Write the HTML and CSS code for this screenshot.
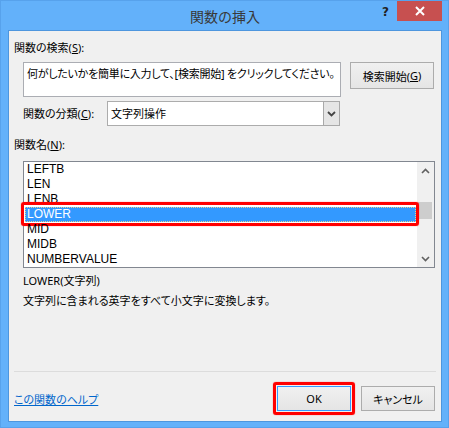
FILE: index.html
```html
<!DOCTYPE html>
<html lang="ja">
<head>
<meta charset="utf-8">
<title>関数の挿入</title>
<link rel="stylesheet" href="styles.css">
</head>
<body>
<div class="window">
  <div class="titlebar">
    <div class="tb-spacer"></div>
    <div class="title">関数の挿入</div>
    <div class="tb-controls">
      <span class="help-q">?</span>
      <div class="close">
        <svg width="10" height="10" viewBox="0 0 10 10"><path d="M1 1 L9 9 M9 1 L1 9" stroke="#fff" stroke-width="2" fill="none"/></svg>
      </div>
    </div>
  </div>
  <div class="content">
    <div class="label label-search">関数の検索(<u>S</u>):</div>
    <div class="search-row">
      <div class="textbox">何がしたいかを簡単に入力して、[検索開始] をクリックしてください。</div>
      <div class="btn btn-search">検索開始(<u>G</u>)</div>
    </div>
    <div class="cat-row">
      <div class="label label-cat">関数の分類(<u>C</u>):</div>
      <div class="select">
        <span class="select-val">文字列操作</span>
        <span class="select-arrow"><svg width="9" height="6" viewBox="0 0 9 6"><path d="M1 1 L4.5 4.5 L8 1" stroke="#444" stroke-width="1.8" fill="none"/></svg></span>
      </div>
    </div>
    <div class="label label-name">関数名(<u>N</u>):</div>
    <div class="listbox">
      <ul class="items">
        <li class="item">LEFTB</li>
        <li class="item">LEN</li>
        <li class="item">LENB</li>
        <li class="item selected">LOWER<span class="mark"></span></li>
        <li class="item">MID</li>
        <li class="item">MIDB</li>
        <li class="item">NUMBERVALUE</li>
      </ul>
      <div class="scrollbar">
        <div class="sb-btn"><svg width="9" height="6" viewBox="0 0 9 6"><path d="M1 5 L4.5 1.5 L8 5" stroke="#606060" stroke-width="1.6" fill="none"/></svg></div>
        <div class="sb-track"><div class="sb-thumb"></div></div>
        <div class="sb-btn"><svg width="9" height="6" viewBox="0 0 9 6"><path d="M1 1 L4.5 4.5 L8 1" stroke="#606060" stroke-width="1.6" fill="none"/></svg></div>
      </div>
    </div>
    <div class="desc">
      <div class="desc-line">LOWER(文字列)</div>
      <div class="desc-line">文字列に含まれる英字をすべて小文字に変換します。</div>
    </div>
    <div class="footer">
      <a class="help-link" href="#">この関数のヘルプ</a>
      <div class="buttons">
        <div class="btn btn-ok">OK<span class="mark mark-ok"></span></div>
        <div class="btn btn-cancel">キャンセル</div>
      </div>
    </div>
  </div>
</div>
</body>
</html>
```
FILE: styles.css
```css
html, body {
  margin: 0;
  padding: 0;
}
body {
  font-family: "Noto Sans", "Noto Sans CJK JP", sans-serif;
  font-size: 11px;
  color: #000;
  font-feature-settings: "palt";
}
.window {
  width: 449px;
  height: 428px;
  box-sizing: border-box;
  background: #63b1fa;
  border: 1px solid #57a2ec;
  padding: 0 6px 5px 7px;
  display: flex;
  flex-direction: column;
}
.titlebar {
  height: 29px;
  display: grid;
  grid-template-columns: 1fr auto 1fr;
  align-items: start;
}
.title {
  font-family: "Noto Sans CJK JP", sans-serif;
  font-size: 14px;
  line-height: 30px;
  color: #383838;
  font-feature-settings: normal;
}
.tb-controls {
  justify-self: end;
  display: flex;
  align-items: flex-start;
}
.help-q {
  font-family: "DejaVu Sans", sans-serif;
  font-weight: bold;
  font-size: 12px;
  line-height: 20px;
  color: #222;
  margin-right: 8px;
  margin-top: 1px;
}
.close {
  width: 45px;
  height: 20px;
  background: #c75050;
  display: flex;
  align-items: center;
  justify-content: center;
}
.content {
  flex: 1;
  background: #f0f0f0;
  border: 1px solid #4d96de;
  padding: 0 5px 10px 5px;
  display: flex;
  flex-direction: column;
}
.label {
  line-height: 16px;
  white-space: nowrap;
}
u {
  text-underline-offset: 1px;
}
.label-search {
  margin-top: 9px;
}
.search-row {
  margin-top: 6px;
  margin-left: 9px;
  display: flex;
  gap: 9px;
  align-items: flex-start;
}
.textbox {
  width: 318px;
  height: 35px;
  box-sizing: border-box;
  background: #fff;
  border: 1px solid #abadb3;
  padding: 3px 3px;
  line-height: 16px;
  letter-spacing: -0.25px;
  white-space: nowrap;
  overflow: hidden;
}
.btn {
  box-sizing: border-box;
  background: linear-gradient(#f0f0f0, #e5e5e5);
  border: 1px solid #acacac;
  display: flex;
  align-items: center;
  justify-content: center;
  white-space: nowrap;
  position: relative;
}
.btn-search {
  width: 84px;
  height: 27px;
}
.cat-row {
  margin-top: 4px;
  margin-left: 9px;
  display: flex;
  align-items: center;
  height: 25px;
}
.label-cat {
  width: 84px;
  flex-shrink: 0;
}
.select {
  width: 233px;
  height: 25px;
  box-sizing: border-box;
  background: #fff;
  border: 1px solid #acacac;
  display: flex;
}
.select-val {
  flex: 1;
  padding-left: 3px;
  line-height: 23px;
}
.select-arrow {
  width: 17px;
  margin: -1px -1px -1px 0;
  box-sizing: border-box;
  border: 1px solid #a9a9a9;
  background: #e5e5e5;
  display: flex;
  align-items: center;
  justify-content: center;
}
.label-name {
  margin-top: 11px;
}
.listbox {
  margin-top: 8px;
  margin-left: 9px;
  width: 412px;
  height: 107px;
  box-sizing: border-box;
  border: 1px solid #828790;
  background: #fff;
  display: flex;
}
.items {
  flex: 1;
  margin: 0;
  padding: 0;
  list-style: none;
}
.item {
  height: 15px;
  line-height: 15px;
  font-family: "Liberation Sans", sans-serif;
  font-size: 12px;
  padding-left: 3px;
  white-space: nowrap;
  position: relative;
}
.item.selected {
  background: #3399ff;
  color: #fff;
  margin: 0 1px;
  padding-left: 2px;
  outline: 1px dotted #e9cf8f;
  outline-offset: -1px;
}
.mark {
  position: absolute;
  box-sizing: border-box;
  border: 3px solid #ff0000;
  border-radius: 3px;
  box-shadow: 0 0 1px #ff3030;
  pointer-events: none;
}
.item .mark {
  left: -4px;
  right: -3px;
  top: -5px;
  bottom: -4px;
}
.scrollbar {
  width: 17px;
  background: #f0f0f0;
  display: flex;
  flex-direction: column;
}
.sb-btn {
  height: 17px;
  display: flex;
  align-items: center;
  justify-content: center;
}
.sb-track {
  flex: 1;
}
.sb-thumb {
  margin-top: 23px;
  margin-left: 1px;
  width: 14px;
  height: 17px;
  background: #cdcdcd;
}
.desc {
  margin-top: 3px;
  margin-left: 9px;
}
.desc-line {
  line-height: 20px;
  white-space: nowrap;
}
.footer {
  margin-top: auto;
  border-top: 1px solid #dcdcdc;
  padding-top: 14px;
  display: flex;
  align-items: center;
  justify-content: space-between;
}
.help-link {
  color: #0066cc;
  text-decoration: underline;
  text-underline-offset: 1px;
}
.buttons {
  display: flex;
  gap: 10px;
  margin-right: 1px;
}
.btn-ok, .btn-cancel {
  width: 74px;
  height: 25px;
}
.btn-ok {
  border-color: #3399ff;
}
.mark-ok {
  left: -5px;
  right: -5px;
  top: -5px;
  bottom: -5px;
}
```
